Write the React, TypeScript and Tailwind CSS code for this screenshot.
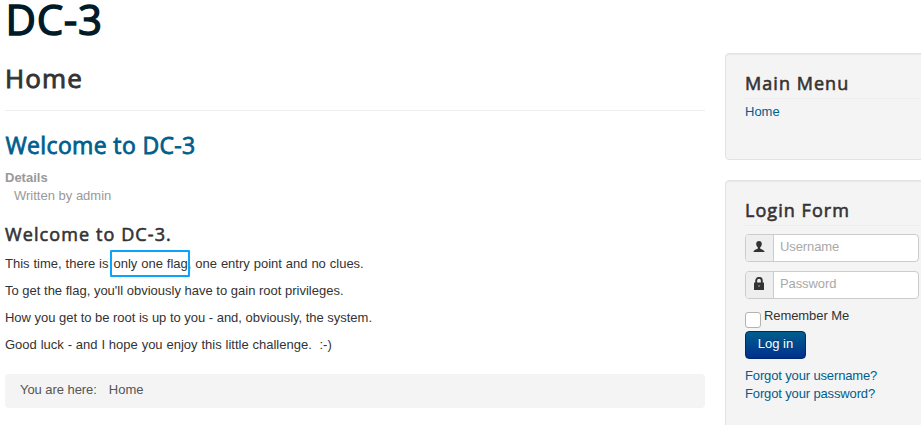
import type { ReactNode } from "react";

const heading = "font-['Open_Sans','Noto_Sans',sans-serif] font-normal whitespace-nowrap";

function Panel({ title, className, children }: { title: string; className: string; children: ReactNode }) {
  return (
    <section
      className={`w-[240px] rounded-[4px] border border-[#e3e3e3] bg-[#f4f4f4] px-[19px] pt-[18px] shadow-[inset_0_1px_1px_rgba(0,0,0,0.05)] ${className}`}
    >
      <h3
        className={`${heading} h-[27px] border-b border-[#ededed] text-[18px] leading-[22px] tracking-[1.05px] text-[#333] [-webkit-text-stroke:0.6px_#333]`}
      >
        {title}
      </h3>
      {children}
    </section>
  );
}

function Field({ placeholder, icon }: { placeholder: string; icon: ReactNode }) {
  return (
    <div className="flex h-[28px] w-[174px] overflow-hidden rounded-[4px] border border-[#ccc] bg-white">
      <span className="flex w-[28px] shrink-0 items-start justify-center border-r border-[#ccc] bg-[#eee] pt-[5px]">
        {icon}
      </span>
      <input
        placeholder={placeholder}
        className="h-[22px] w-[140px] bg-transparent px-[6px] text-[13px] leading-[18px] tracking-[-0.1px] text-[#555] outline-none placeholder:text-[#a9a9a9]"
      />
    </div>
  );
}

export default function App() {
  return (
    <div className="flex h-[425px] w-[921px] overflow-hidden bg-white pl-[5px] font-['Liberation_Sans',Arial,sans-serif] text-[13px] leading-[18px] text-[#333]">
      <main className="w-[700px] shrink-0">
        <h1
          className={`${heading} h-[59px] pl-[0.5px] text-[42px] leading-[38px] tracking-[0.7px] text-[#001a27] [-webkit-text-stroke:1.4px_#001a27]`}
        >
          DC-3
        </h1>
        <h2
          className={`${heading} h-[52px] border-b border-[#eee] text-[26px] leading-[39px] tracking-[1.1px] [-webkit-text-stroke:0.9px_#333]`}
        >
          Home
        </h2>
        <h2
          className={`${heading} mt-[16px] h-[42px] pl-[0.5px] text-[23px] leading-[36px] tracking-[0.36px] text-[#005e8d] [-webkit-text-stroke:0.8px_#005e8d]`}
        >
          Welcome to DC-3
        </h2>
        <dl className="text-[#999]">
          <dt className="font-bold">Details</dt>
          <dd className="ml-[9px]">Written by admin</dd>
        </dl>
        <h3
          className={`${heading} mt-[17px] h-[33px] text-[18px] leading-[24px] tracking-[1.1px] [-webkit-text-stroke:0.6px_#333]`}
        >
          Welcome to DC-3.
        </h3>
        <div className="flex flex-col gap-[9px]">
          <p className="[word-spacing:0.3px]">
            This time, there is{" "}
            <span className="relative ml-[1px]">
              only one flag
              <span className="absolute -top-[6px] -left-[3px] h-[27px] w-[80px] rounded-[1px] border-2 border-[#0aa5fa]" />
            </span>
            , one entry point and no clues.
          </p>
          <p>To get the flag, you'll obviously have to gain root privileges.</p>
          <p className="tracking-[-0.02px]">How you get to be root is up to you - and, obviously, the system.</p>
          <p className="[word-spacing:0.25px]">Good luck - and I hope you enjoy this little challenge.&nbsp; :-)</p>
        </div>
        <nav className="mt-[20px] flex h-[34px] gap-[12px] rounded-[4px] bg-[#f4f4f4] px-[15px] pt-[7px] text-[#555]">
          <span className="tracking-[-0.06px]">You are here:</span>
          <span>Home</span>
        </nav>
      </main>
      <aside className="ml-[20px] shrink-0 pt-[53px]">
        <Panel title="Main Menu" className="h-[107px]">
          <a className="mt-[4px] block text-[#005e8d]">Home</a>
        </Panel>
        <Panel title="Login Form" className="mt-[20px] h-[300px]">
          <div className="mt-[8px] flex flex-col gap-[9px]">
            <Field
              placeholder="Username"
              icon={
                <svg className="mt-[1px] mr-[2px]" width="12" height="12" viewBox="0 0 12 12" fill="#333">
                  <path d="M6 0C4.200 0 3.200 1.200 3.200 2.900c0 1.600.8 2.700 1.600 3.400v1.200C4.500 8.300.8 8.500.4 11h11.200C11.200 8.500 7.500 8.300 7.200 7.500V6.300C8 5.600 8.800 4.500 8.800 2.900 8.800 1.200 7.800 0 6 0Z" />
                </svg>
              }
            />
            <Field
              placeholder="Password"
              icon={
                <svg className="mr-[2px]" width="12" height="13" viewBox="0 0 12 13">
                  <path d="M3.200 6V3.700a2.800 2.800 0 0 1 5.600 0V6" fill="none" stroke="#333" strokeWidth="1.900" />
                  <rect x="1" y="5.500" width="10" height="7.500" rx=".5" fill="#333" />
                  <circle cx="6" cy="9" r=".8" fill="#bbb" />
                </svg>
              }
            />
          </div>
          <label className="mt-[8px] flex h-[24px] tracking-[-0.08px]">
            <span className="mt-[5px] mr-[3px] h-[16px] w-[16px] rounded-[3px] border border-[#b6b2ae] bg-white" />
            Remember Me
          </label>
          <button className="block h-[28px] w-[61px] rounded-[4px] border border-[#00286f] bg-linear-to-b from-[#005e8d] to-[#002f8d] pb-[2px] text-[13px] leading-[18px] text-white [text-shadow:0_-1px_0_rgba(0,0,0,0.25)]">
            Log in
          </button>
          <ul className="mt-[8px] tracking-[-0.14px] text-[#005e8d]">
            <li>Forgot your username?</li>
            <li>Forgot your password?</li>
          </ul>
        </Panel>
      </aside>
    </div>
  );
}
